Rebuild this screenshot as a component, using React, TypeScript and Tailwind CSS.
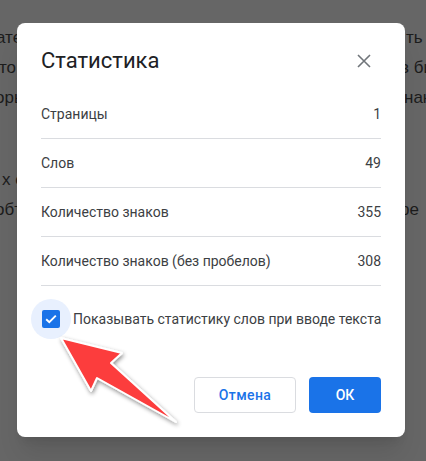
const rows = [
  { label: "Страницы", value: "1" },
  { label: "Слов", value: "49" },
  { label: "Количество знаков", value: "355" },
  { label: "Количество знаков (без пробелов)", value: "308" },
];

const bgLines = [
  { left: "ате", right: "ть", shift: "-ml-[4px]", gap: "w-[410px]", top: "" },
  { left: "то", right: "в би", shift: "-ml-[1px]", gap: "w-[401px]", top: "" },
  { left: "оры", right: "нак", shift: "-ml-[5px]", gap: "w-[409px]", top: "" },
  { left: "х с", right: "", shift: "ml-[2px]", gap: "w-[404px]", top: "mt-[52px]" },
  { left: "обт", right: "ре", shift: "-ml-[5px]", gap: "w-[405px]", top: "" },
];

function CloseIcon() {
  return (
    <svg width="14" height="14" viewBox="0 0 14 14" fill="none">
      <path d="M1 1 13 13M13 1 1 13" stroke="#70757a" strokeWidth="1.6" />
    </svg>
  );
}

function Arrow() {
  return (
    <svg
      className="pointer-events-none absolute left-0 top-0"
      width="426"
      height="461"
      viewBox="0 0 426 461"
    >
      <defs>
        <filter id="arrowShadow" x="-20%" y="-20%" width="140%" height="140%">
          <feDropShadow dx="1" dy="2" stdDeviation="2" floodColor="#000" floodOpacity="0.45" />
        </filter>
      </defs>
      <polygon
        points="61,338 122,353 111,363 176,422 97,378 91,391"
        fill="#fc3d3d"
        stroke="#fff"
        strokeWidth="2"
        strokeLinejoin="round"
        filter="url(#arrowShadow)"
      />
    </svg>
  );
}

export default function App() {
  return (
    <div className="relative h-[461px] w-[426px] overflow-hidden bg-[#666666] font-['Roboto',sans-serif]">
      {/* document text behind the overlay */}
      <div className="pt-[23px] font-['Liberation_Sans',Arial,sans-serif] text-[17px] text-[#1c1c1c]">
        {bgLines.map((l, i) => (
          <div key={i} className={`flex h-[30px] items-center overflow-hidden whitespace-nowrap ${l.top}`}>
            <span className={`shrink-0 ${l.gap} ${l.shift}`}>{l.left}</span>
            <span>{l.right}</span>
          </div>
        ))}
      </div>

      {/* dialog */}
      <div className="absolute left-[17px] top-[23px] flex h-[414px] w-[388px] flex-col rounded-lg bg-white p-6 shadow-xl">
        <div className="flex h-7 items-center justify-between">
          <h2 className="text-[22px] leading-7 text-[#202124]">Статистика</h2>
          <button className="mr-[10px] flex h-[14px] w-[14px] items-center justify-center">
            <CloseIcon />
          </button>
        </div>

        <div className="mt-[15px]">
          {rows.map((r) => (
            <div
              key={r.label}
              className="flex h-[49px] items-center justify-between border-b-[1.5px] border-[#dadce0] text-sm text-[#3c4043]"
            >
              <span>{r.label}</span>
              <span>{r.value}</span>
            </div>
          ))}
        </div>

        <div className="mt-[13px] flex h-10 items-center">
          <div className="-ml-[10px] flex h-10 w-10 shrink-0 items-center justify-center rounded-full bg-[#e8f0fe]">
            <div className="flex h-[18px] w-[18px] items-center justify-center rounded-[2px] bg-[#1a73e8]">
              <svg width="12" height="10" viewBox="0 0 12 10" fill="none">
                <path d="M1.2 5.2 4.3 8.2 10.8 1.6" stroke="#fff" strokeWidth="1.9" />
              </svg>
            </div>
          </div>
          <span className="ml-[2px] whitespace-nowrap text-sm text-[#3c4043]">
            Показывать статистику слов при вводе текста
          </span>
        </div>

        <div className="mt-auto flex justify-end gap-[13px]">
          <button className="h-9 w-[102px] rounded border border-[#dadce0] text-sm font-medium tracking-wide text-[#1a73e8]">
            Отмена
          </button>
          <button className="h-9 w-[72px] rounded bg-[#1a73e8] text-sm font-medium text-white">
            ОК
          </button>
        </div>
      </div>

      <Arrow />
    </div>
  );
}
